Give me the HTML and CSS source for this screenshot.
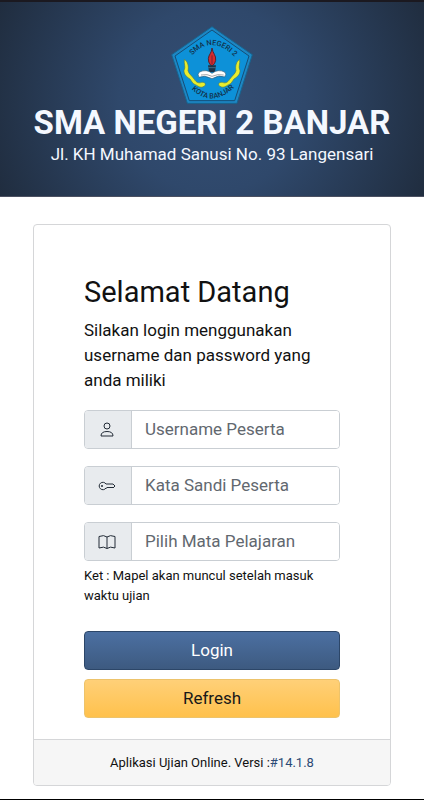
FILE: index.html
```
<!DOCTYPE html>
<html lang="id">
<head>
  <meta charset="UTF-8" />
  <title>SMA NEGERI 2 BANJAR</title>
  <meta name="viewport" content="width=device-width, initial-scale=1.0" />
  <link rel="stylesheet" href="styles.css">
</head>
<body>

  <header class="banner">
    <svg class="logo" viewBox="0 0 246 234" role="img" aria-label="Logo sekolah">
      <defs>
        <path id="arcTop" d="M58 94 Q123 18 196 98" />
        <path id="arcBottom" d="M58 186 Q122 252 194 181" />
      </defs>
      <path d="M123 2 L244 86 L198 232 H49 L2 86 Z" fill="#1d87c4" stroke="#17648f" stroke-width="3" />
      <path d="M123 12 L234 90 L191 224 H55 L12 90 Z" fill="#0d91d8" stroke="#164e77" stroke-width="3" />
      <text class="logo-text" text-anchor="middle"><textPath href="#arcTop" startOffset="50%">SMA NEGERI 2</textPath></text>
      <text class="logo-text" text-anchor="middle"><textPath href="#arcBottom" startOffset="50%">KOTA BANJAR</textPath></text>
      <!-- obor dan buku -->
      <path d="M123 66 C125 82 136 88 134 103 Q132 113 126 118 H119 Q111 108 112 98 C113 85 122 82 123 66 Z" fill="#d52b2e" stroke="#4b2534" stroke-width="3" />
      <path d="M123 88 V114" stroke="#7d2230" stroke-width="3" />
      <path d="M111 118 H135 L132 138 H114 Z" fill="#1c3349" />
      <path d="M112 125 H134" stroke="#568ba6" stroke-width="2" />
      <path d="M85 138 Q107 128 123 142 Q141 128 161 138 Q168 144 161 153 Q143 146 128 156 Q123 160 118 156 Q102 147 84 154 Q78 145 85 138 Z" fill="#fff" stroke="#245a7a" stroke-width="2" />
      <path d="M90 147 Q110 143 123 151 Q140 143 158 147" fill="none" stroke="#777" stroke-width="2" />
      <!-- sulur kuning -->
      <path id="vine" d="M40 100 C50 106 54 121 51 134 C54 145 63 149 70 160 C77 171 84 172 92 169 C102 166 107 177 99 181 C88 188 80 179 73 176 C65 174 62 165 57 159 C47 153 38 145 39 133 C45 123 38 114 40 100 Z" fill="#e9ed2c" stroke="#4e7b55" stroke-width="2" />
      <use href="#vine" transform="matrix(-1 0 0 1 246 0)" />
    </svg>
    <h1>SMA NEGERI 2 BANJAR</h1>
    <p>Jl. KH Muhamad Sanusi No. 93 Langensari</p>
  </header>

  <main class="card">
    <form class="card-body">
      <h2>Selamat Datang</h2>
      <p class="intro">Silakan login menggunakan username dan password yang anda miliki</p>

      <div class="input-group">
        <label for="username" aria-label="Username Peserta">
          <svg class="icon" viewBox="0 0 18 18"><circle cx="9" cy="5" r="3" /><path d="M3 15 Q3 10.500 9 10.500 T15 15 Z" /></svg>
        </label>
        <input type="text" id="username" placeholder="Username Peserta" />
      </div>

      <div class="input-group">
        <label for="password" aria-label="Kata Sandi Peserta">
          <svg class="icon" viewBox="0 0 18 18"><path d="M8 7 H15 L17 9 L15 11 L14 10 L13 11 L12 10 L11 11 L10 10 L9 11 H8 A3.700 3.700 0 1 1 8 7 Z" /><circle class="dot" cx="4" cy="9" r="1" /></svg>
        </label>
        <input type="password" id="password" placeholder="Kata Sandi Peserta" />
      </div>

      <div class="input-group">
        <label for="mapel" aria-label="Pilih Mata Pelajaran">
          <svg class="icon" viewBox="0 0 18 18"><path d="M9 4 Q6 1.500 1 3.500 V15 Q6 13 9 15.500 Q12 13 17 15 V3.500 Q12 1.500 9 4 V15.500" /></svg>
        </label>
        <select id="mapel">
          <option value="">Pilih Mata Pelajaran</option>
        </select>
      </div>
      <p class="note">Ket : Mapel akan muncul setelah masuk waktu ujian</p>

      <div class="actions">
        <button type="submit" class="btn btn-login">Login</button>
        <button type="button" class="btn btn-refresh">Refresh</button>
      </div>
    </form>

    <footer class="card-footer">Aplikasi Ujian Online. Versi :<a href="#">#14.1.8</a></footer>
  </main>

</body>
</html>
```
FILE: styles.css
```
* {
  box-sizing: border-box;
}

body {
  margin: 0;
  min-height: 100vh;
  font-family: Roboto, "Liberation Sans", sans-serif;
  font-size: 17px;
  line-height: 25px;
  color: #111;
  background: #fff;
  border-bottom: 1px solid #000;
}

h1, h2, p {
  margin: 0;
}

.banner {
  padding: 24px 16px 29px;
  text-align: center;
  color: #f4f8ff;
  background: radial-gradient(circle farthest-corner, #344f75 0%, #2f486b 40%, #202d3f 100%);
  border-top: 2px solid #1b1920;
  border-bottom: 1px solid #4b5061;
}

.logo {
  display: block;
  width: 82px;
  height: 78px;
  margin: 0 auto;
}

.logo-text {
  font-size: 22px;
  font-weight: 500;
  fill: #12324b;
}

.banner h1 {
  font-size: 33px;
  line-height: 38px;
  font-weight: 700;
}

.card {
  margin: 27px 33px 13px;
  border: 1px solid #d5d6d8;
  border-radius: 4px;
  overflow: hidden;
}

.card-body {
  padding: 50px 50px 21px;
}

.card-body h2 {
  font-size: 29px;
  line-height: 35px;
  font-weight: 400;
  margin-bottom: 8px;
}

.intro {
  margin-bottom: 17px;
}

.input-group {
  display: flex;
  height: 39px;
  margin-bottom: 17px;
  border: 1px solid #c9ced3;
  border-radius: 4px;
  overflow: hidden;
}

.input-group label {
  display: flex;
  align-items: center;
  padding: 0 14px 0 12px;
  background: #e8ebee;
  border-right: 1px solid #c9ced3;
}

.icon {
  width: 20px;
  height: 18px;
  fill: none;
  stroke: #222b36;
  stroke-width: 1;
}

.icon .dot {
  fill: #222b36;
  stroke: none;
}

.input-group input,
.input-group select {
  flex: 1;
  min-width: 0;
  padding: 0 13px;
  font: inherit;
  color: #62686f;
  background: #fff;
  border: 0;
  appearance: none;
}

.input-group input::placeholder {
  color: #62686f;
}

.note {
  margin-top: -12px;
  font-size: 13px;
  line-height: 20px;
}

.actions {
  display: grid;
  gap: 9px;
  margin-top: 25px;
}

.btn {
  height: 39px;
  padding: 0;
  font: inherit;
  border-radius: 4px;
  cursor: pointer;
}

.btn-login {
  color: #fff;
  background: linear-gradient(#4c70a2, #3d5a80);
  border: 1px solid #2c4668;
}

.btn-refresh {
  color: #181818;
  background: linear-gradient(#ffd078, #ffc14c);
  border: 1px solid #edc36b;
}

.card-footer {
  padding: 10px 16px;
  font-size: 13px;
  text-align: center;
  background: #f6f6f6;
  border-top: 1px solid #d5d6d8;
}

.card-footer a {
  color: #2b4a75;
  text-decoration: none;
}
```
